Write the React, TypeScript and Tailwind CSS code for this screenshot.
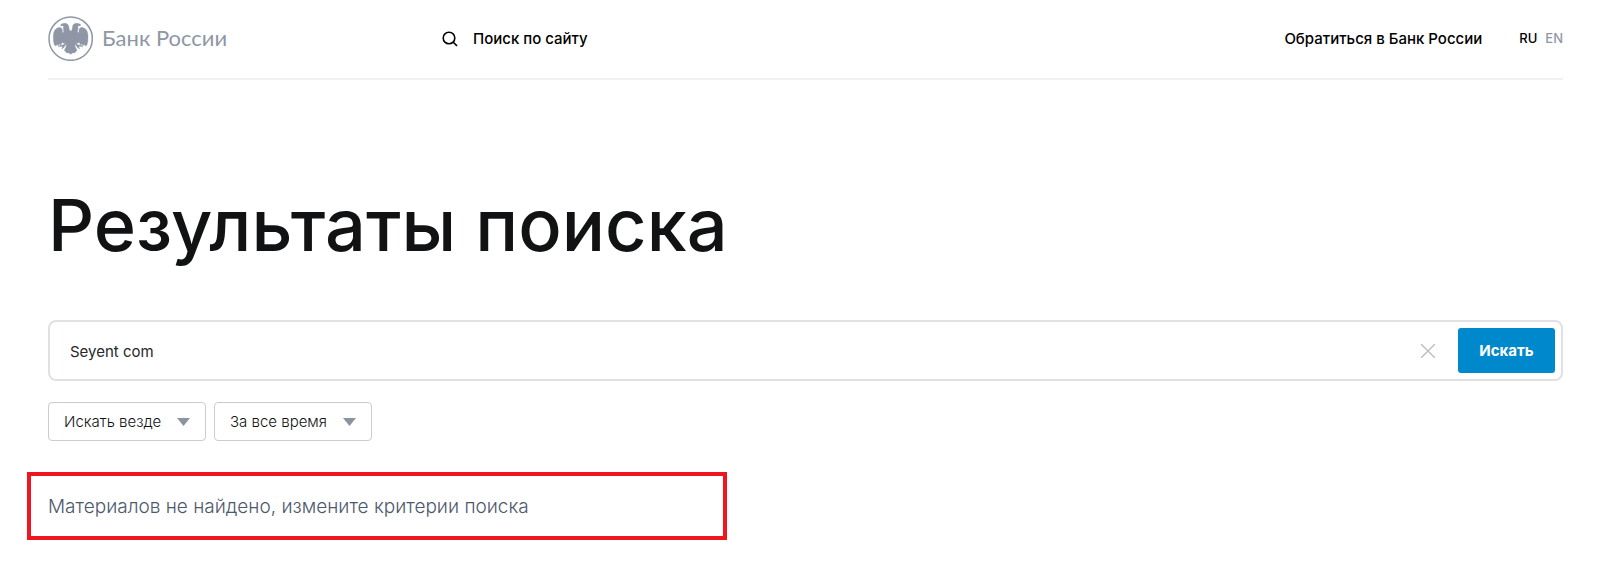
import { useState } from "react";

function Emblem() {
  return (
    <svg viewBox="52 47 135 135" className="size-[45px] shrink-0" aria-hidden="true">
      <circle cx="120" cy="115" r="65" fill="none" stroke="#8f97a6" strokeWidth="4.5" />
      <g fill="#8f97a6" stroke="#8f97a6" strokeWidth="1">
        <path d="M91 72 Q97 68 106 69 Q115 72 115 83 L117 91 H123 L125 83 Q125 72 134 69 Q143 68 149 72 L150 76 L141 77 Q144 84 141 91 L141 96 Q144 98 145 94 Q143 83 154 81 Q171 84 172 105 Q173 122 169 134 L164 137 L161 132 L157 137 L153 131 L149 133 L146 126 L142 129 L139 127 L133 134 L134 140 L139 150 L132 158 L127 157 L120 162 L113 157 L108 158 L101 150 L106 140 L107 134 L101 127 L98 129 L94 126 L91 133 L87 131 L83 137 L79 132 L76 137 L71 134 Q67 122 68 105 Q69 84 86 81 Q97 83 95 94 Q96 98 99 96 L99 91 Q96 84 99 77 L90 76 Z" />
        <path d="M106 131 L99 139 L91 138 L83 140 L89 134 L98 134 L102 129 Z" />
        <path d="M97 136 L93 146 L99 142 L104 134 Z" />
        <path d="M134 131 L141 139 L149 138 L157 140 L151 134 L142 134 L138 129 Z" />
        <path d="M143 136 L147 146 L141 142 L136 134 Z" />
      </g>
    </svg>
  );
}

function SearchIcon() {
  return (
    <svg viewBox="0 0 16 16" className="size-4" fill="none" stroke="#000" strokeWidth="1.6" aria-hidden="true">
      <circle cx="7" cy="7" r="5.8" />
      <path d="M11 11 L15 14.8" />
    </svg>
  );
}

function Filter({ label, options }: { label: string; options: string[] }) {
  return (
    <div className="grid items-center">
      <select
        aria-label={label}
        className="col-start-1 row-start-1 h-[39px] w-[158px] appearance-none rounded-[4px] border border-[#c9ccd3] bg-white pt-0.5 pr-10 pl-[15px] text-[15px] font-light text-[#111214]"
      >
        {options.map((option) => (
          <option key={option}>{option}</option>
        ))}
      </select>
      <svg
        viewBox="0 0 13 8"
        className="pointer-events-none col-start-1 row-start-1 mr-4 h-2 w-[13px] justify-self-end"
        aria-hidden="true"
      >
        <path d="M0 0 H13 L6.5 8 Z" fill="#8c93a1" />
      </svg>
    </div>
  );
}

export default function App() {
  const [query, setQuery] = useState("Seyent com");

  return (
    <div className="bg-white pr-[37px] pl-12 font-['Inter','Noto_Sans',sans-serif] text-[#111214]">
      <header className="flex h-20 items-center border-b-2 border-[#f2f2f3] text-[15px] font-medium text-black">
        <a href="#" className="flex w-[394px] shrink-0 items-center gap-[9px] pb-0.5">
          <Emblem />
          <span className="pb-0.5 font-['Lato','Open_Sans',sans-serif] text-[22px] font-normal text-[#8f97a6]">
            Банк России
          </span>
        </a>
        <a href="#search" className="flex items-center gap-[15px]">
          <SearchIcon />
          Поиск по сайту
        </a>
        <a href="#contact" className="ml-auto">
          Обратиться в Банк России
        </a>
        <nav className="ml-[37px] flex gap-2 text-[13px]">
          <a href="#ru">RU</a>
          <a href="#en" className="text-[#8f97a6]">
            EN
          </a>
        </nav>
      </header>

      <main>
        <h1 className="mt-[100px] text-[72px] leading-[90px] font-medium">Результаты поиска</h1>

        <form
          id="search"
          onSubmit={(event) => event.preventDefault()}
          className="mt-[50px] flex h-[61px] items-center rounded-[8px] border-2 border-[#e0e1e4] pr-1.5"
        >
          <input
            type="text"
            aria-label="Поиск"
            value={query}
            onChange={(event) => setQuery(event.target.value)}
            className="h-full min-w-0 flex-1 bg-transparent pt-0.5 pl-5 text-[15px] text-[#26282c] outline-none"
          />
          <button type="button" aria-label="Очистить" onClick={() => setQuery("")} className="mr-[23px]">
            <svg viewBox="0 0 14 14" className="size-[14px]" stroke="#b9bdc8" strokeWidth="1.4" aria-hidden="true">
              <path d="M0 0 L14 14 M14 0 L0 14" />
            </svg>
          </button>
          <button type="submit" className="h-[45px] w-[97px] rounded-[3px] bg-[#0088cd] pt-0.5 text-[15px] font-bold text-white">
            Искать
          </button>
        </form>

        <div className="mt-[21px] flex gap-2">
          <Filter label="Раздел" options={["Искать везде"]} />
          <Filter label="Период" options={["За все время"]} />
        </div>

        <p className="mt-[31px] -ml-[21px] flex h-[68px] w-[700px] max-w-full items-center border-4 border-[#f0141e] pt-[3px] pl-[17px] text-[19px] font-light text-[#4d586b]">
          Материалов не найдено, измените критерии поиска
        </p>
      </main>
    </div>
  );
}
